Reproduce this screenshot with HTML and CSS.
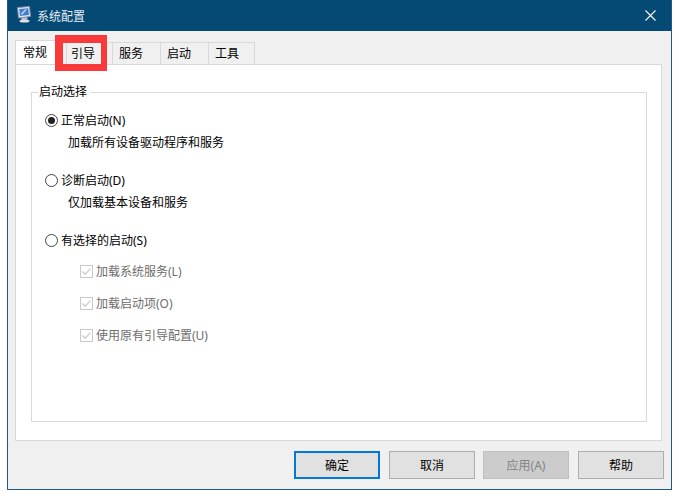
FILE: index.html
```html
<!DOCTYPE html>
<html lang="zh-CN">
<head>
<meta charset="utf-8">
<title>系统配置</title>
<link rel="stylesheet" href="styles.css">
</head>
<body>
<div class="window">
  <header class="titlebar">
    <svg class="app-icon" width="16" height="17" viewBox="0 0 16 17">
      <path d="M1.5 1.5 L13.5 .5 L14.5 10.5 L2.5 12 Z" fill="#e6ebf2" stroke="#7d8ba6"/>
      <path d="M3.2 3 L12.3 2.2 L13 9 L4 10 Z" fill="#3f7fd0"/>
      <path d="M5 7.5 L9 3.4 L11 3.2 L6 9 Z" fill="#bcd8f5"/>
      <path d="M5 12 L11 11.2 L12 13.6 L6 14.6 Z" fill="#b9bfc8"/>
      <ellipse cx="8.5" cy="15" rx="5" ry="1.5" fill="#dfe2e7"/>
    </svg>
    <span class="title">系统配置</span>
    <svg class="close" width="11" height="11" viewBox="0 0 11 11">
      <path d="M.5 .5 L10.5 10.5 M10.5 .5 L.5 10.5" stroke="#fff" stroke-width="1.1" fill="none"/>
    </svg>
  </header>
  <main class="body">
    <nav class="tabs">
      <span class="tab tab-active">常规</span>
      <span class="tab tab-boot">引导<i class="highlight"></i></span>
      <span class="tab">服务</span>
      <span class="tab">启动</span>
      <span class="tab tab-last">工具</span>
    </nav>
    <section class="panel">
      <fieldset class="group">
        <legend class="legend">启动选择</legend>
        <div class="option">
          <span class="radio radio-on"></span><span>正常启动(N)</span>
        </div>
        <p class="desc">加载所有设备驱动程序和服务</p>
        <div class="option">
          <span class="radio"></span><span>诊断启动(D)</span>
        </div>
        <p class="desc">仅加载基本设备和服务</p>
        <div class="option">
          <span class="radio"></span><span>有选择的启动(S)</span>
        </div>
        <ul class="checks">
          <li class="check-row"><svg class="check" width="13" height="13" viewBox="0 0 13 13"><rect x=".5" y=".5" width="12" height="12" fill="#fff" stroke="#c8c8c8"/><path d="M2.5 6.5 L5.2 9.2 L10.5 3.5" stroke="#c4c4c4" stroke-width="1.1" fill="none"/></svg>加载系统服务(L)</li>
          <li class="check-row"><svg class="check" width="13" height="13" viewBox="0 0 13 13"><rect x=".5" y=".5" width="12" height="12" fill="#fff" stroke="#c8c8c8"/><path d="M2.5 6.5 L5.2 9.2 L10.5 3.5" stroke="#c4c4c4" stroke-width="1.1" fill="none"/></svg>加载启动项(O)</li>
          <li class="check-row"><svg class="check" width="13" height="13" viewBox="0 0 13 13"><rect x=".5" y=".5" width="12" height="12" fill="#fff" stroke="#c8c8c8"/><path d="M2.5 6.5 L5.2 9.2 L10.5 3.5" stroke="#c4c4c4" stroke-width="1.1" fill="none"/></svg>使用原有引导配置(U)</li>
        </ul>
      </fieldset>
    </section>
    <footer class="buttons">
      <button class="btn btn-default">确定</button>
      <button class="btn">取消</button>
      <button class="btn btn-disabled">应用(A)</button>
      <button class="btn">帮助</button>
    </footer>
  </main>
</div>
</body>
</html>
```
FILE: styles.css
```css
* { box-sizing: border-box; }
html, body { margin: 0; padding: 0; background: #fff; }
body {
  width: 679px;
  height: 497px;
  overflow: hidden;
  padding-left: 7px;
  font-family: "Noto Sans", "Noto Sans CJK SC", sans-serif;
  font-size: 12px;
  color: #000;
}
.window {
  width: 665px;
  height: 490px;
  border: 1px solid #1f5a80;
  border-top: 0;
  background: #f0f0f0;
  display: flex;
  flex-direction: column;
}
.titlebar {
  height: 31px;
  flex: none;
  background: #044a75;
  display: flex;
  align-items: center;
  padding: 0 15px 0 8px;
  color: #fff;
}
.app-icon { margin-right: 5px; margin-top: -2px; }
.title { flex: 1; color: #e6eef4; }
.body { flex: 1; padding: 10px 10px 0 7px; display: flex; flex-direction: column; }
.tabs { display: flex; height: 23px; flex: none; position: relative; z-index: 1; }
.tab {
  position: relative;
  width: 48px;
  height: 22px;
  margin-top: 1px;
  padding-left: 6px;
  background: #f0f0f0;
  border: 1px solid #d9d9d9;
  border-bottom: 0;
  border-left: 0;
  line-height: 22px;
}
.tab-active {
  width: 41px;
  height: 24px;
  margin-top: -1px;
  padding-left: 7px;
  background: #fff;
  border-left: 1px solid #d9d9d9;
  line-height: 24px;
}
.tab-boot {
  width: 47px;
  margin-left: 10px;
  padding-left: 4px;
  border-left: 1px solid #d9d9d9;
}
.tab-last { width: 46px; }
.highlight {
  position: absolute;
  left: -12px;
  top: -8px;
  width: 52px;
  height: 36px;
  border-style: solid;
  border-color: #f93a3a;
  border-width: 8px 6px 7px 8px;
}
.panel {
  width: 647px;
  height: 377px;
  flex: none;
  background: #fff;
  border: 1px solid #d9d9d9;
  padding: 20px 14px 18px 15px;
}
.group {
  margin: 0;
  height: 337px;
  min-width: 0;
  border: 1px solid #d9d9d9;
  padding: 10px 13px 0;
}
.legend { padding: 0 3px 0 1px; margin-left: -7px; line-height: 14px; }
.option { display: flex; align-items: center; height: 20px; margin-top: 1px; }
.radio {
  width: 13px;
  height: 13px;
  border: 1px solid #444;
  border-radius: 50%;
  background: #fff;
  margin-right: 3px;
  position: relative;
  flex: none;
}
.radio-on::after {
  content: "";
  position: absolute;
  left: 2px;
  top: 2px;
  width: 7px;
  height: 7px;
  border-radius: 50%;
  background: #222;
}
.desc { margin: 3px 0 0 23px; height: 36px; line-height: 20px; }
.checks { list-style: none; margin: 0; padding: 5px 0 0 35px; color: #6d6d6d; }
.check-row { display: flex; align-items: center; height: 32px; }
.check { margin-right: 3px; flex: none; }
.buttons { display: flex; padding-left: 279px; margin-top: 10px; gap: 9px; }
.btn {
  width: 86px;
  height: 28px;
  padding: 0;
  background: #e1e1e1;
  border: 1px solid #adadad;
  font: inherit;
  color: #000;
  flex: none;
}
.btn-default { border: 2px solid #0078d7; }
.btn-disabled { background: #cccccc; border-color: #bfbfbf; color: #838383; margin-left: -1px; }
```
